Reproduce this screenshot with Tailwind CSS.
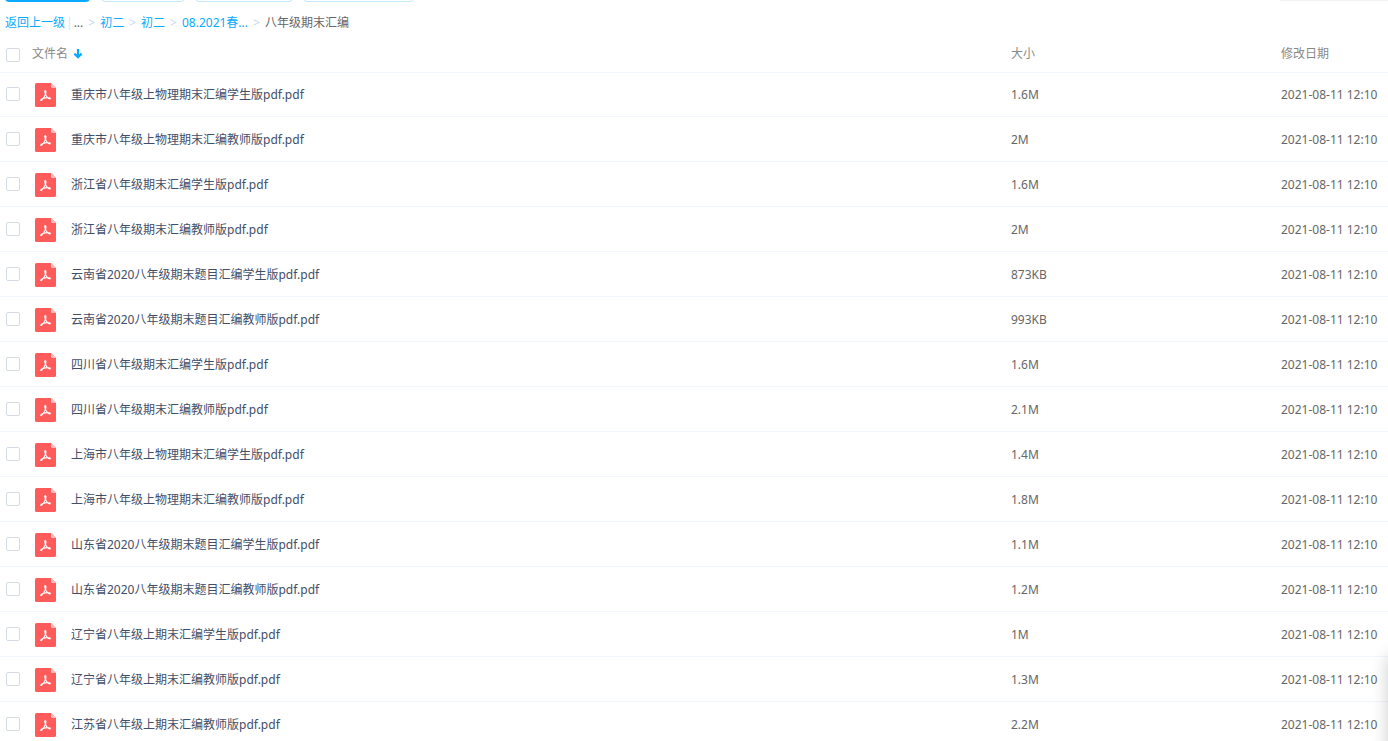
<!DOCTYPE html>
<html lang="zh-CN">
  <head>
    <meta charset="UTF-8" />
    <meta name="viewport" content="width=device-width, initial-scale=1.0" />
    <title>八年级期末汇编</title>
    <script src="https://cdn.jsdelivr.net/npm/@tailwindcss/browser@4"></script>
  </head>

  <body
    class="h-screen overflow-hidden bg-white font-['Noto_Sans','Noto_Sans_CJK_SC',sans-serif] text-xs text-[#666]"
  >
    <!-- Toolbar, scrolled almost out of view -->
    <header class="flex h-[2px] items-end overflow-hidden pl-[5px]">
      <button class="h-8 w-[85px] shrink-0 rounded bg-[#09aaff]"></button>
      <button class="ml-[11px] h-8 w-[84px] shrink-0 rounded border border-[#c3eaff]"></button>
      <button class="ml-[10px] h-8 w-[98px] shrink-0 rounded border border-[#c3eaff]"></button>
      <button class="ml-[10px] h-8 w-[111px] shrink-0 rounded border border-[#c3eaff]"></button>
      <div class="mb-px ml-auto h-8 w-[108px] shrink-0 bg-[#f2f2f2]"></div>
    </header>

    <!-- Breadcrumb -->
    <nav class="flex h-10 items-center pt-0.5 pl-[5px] text-[#09aaff]">
      <a href="#">返回上一级</a>
      <span class="mx-px text-[#c3eaff]">|</span>
      <span class="text-[#666]">...</span>
      <span class="mx-[5px] text-[#c4d8f1]">&gt;</span>
      <a href="#">初二</a>
      <span class="mx-[5px] text-[#c4d8f1]">&gt;</span>
      <a href="#">初二</a>
      <span class="mx-[5px] text-[#c4d8f1]">&gt;</span>
      <a href="#">08.2021春...</a>
      <span class="mx-[5px] text-[#c4d8f1]">&gt;</span>
      <span class="text-[#666]">八年级期末汇编</span>
    </nav>

    <!-- File list -->
    <table class="w-full table-fixed border-separate border-spacing-0 text-left">
      <colgroup>
        <col class="w-[31px]" />
        <col />
        <col class="w-[270px]" />
        <col class="w-[107px]" />
      </colgroup>
      <thead class="text-[#888]">
        <tr class="h-[31px]">
          <th class="border-b border-[#f2f6fd] pb-1 pl-[6px]">
            <input type="checkbox" aria-label="文件名" class="block size-[14px] appearance-none rounded-xs border border-[#d5dbe5]" />
          </th>
          <th class="border-b border-[#f2f6fd] pb-1.5 pl-px font-normal">
            <span class="flex items-center gap-[5px]">
              文件名
              <svg class="h-[10px] w-[10px]" viewBox="0 0 10 10" fill="none" stroke="#09aaff" stroke-width="2">
                <path d="M5 0V8.500M1.400 4.600L5 8.200L8.600 4.600" stroke-width="2.200" />
              </svg>
            </span>
          </th>
          <th class="border-b border-[#f2f6fd] pb-1.5 font-normal">大小</th>
          <th class="border-b border-[#f2f6fd] pb-1.5 font-normal">修改日期</th>
        </tr>
      </thead>
      <tbody id="file-list"></tbody>
    </table>

    <!-- Shadow of the panel docked outside the right edge -->
    <div class="fixed -right-[200px] -bottom-[60px] h-[145px] w-[200px] shadow-[0_0_16px_rgba(0,0,0,0.2)]"></div>

    <template id="file-row">
      <tr class="group h-[45px] first:h-11">
        <td class="border-b border-[#f2f6fd] pl-[6px] group-first:pb-px">
          <input type="checkbox" class="block size-[14px] appearance-none rounded-xs border border-[#d5dbe5]" />
        </td>
        <td class="border-b border-[#f2f6fd] pt-0.5 pl-1 group-first:pt-px">
          <div class="flex items-center gap-[15px]">
            <svg class="h-6 w-[21px] shrink-0" viewBox="0 0 21 24">
              <path d="M1.500 0H16L21 5V22.500Q21 24 19.500 24H1.500Q0 24 0 22.500V1.500Q0 0 1.500 0Z" fill="#ff5b5b" />
              <path d="M16 0L21 5H17Q16 5 16 4Z" fill="#ffbdbd" />
              <path d="M9.600 7.700Q11.300 7.300 10.900 9.500Q10.600 12.700 7 16.900Q6.100 17.900 5.700 17.200Q5.700 16.300 8 15.400Q11.300 14.300 14.300 14.800Q16 15.300 15 15.900Q13.300 16 11.300 13Q9.900 10.500 9.600 7.700" fill="none" stroke="#fff" stroke-width="1.100" stroke-linejoin="round" />
            </svg>
            <a href="#" class="name text-[#424e67]"></a>
          </div>
        </td>
        <td class="size border-b border-[#f2f6fd] pt-0.5 group-first:pt-px"></td>
        <td class="date border-b border-[#f2f6fd] pt-0.5 whitespace-nowrap group-first:pt-px"></td>
      </tr>
    </template>

    <script>
      const files = [
        ["重庆市八年级上物理期末汇编学生版pdf.pdf", "1.6M"],
        ["重庆市八年级上物理期末汇编教师版pdf.pdf", "2M"],
        ["浙江省八年级期末汇编学生版pdf.pdf", "1.6M"],
        ["浙江省八年级期末汇编教师版pdf.pdf", "2M"],
        ["云南省2020八年级期末题目汇编学生版pdf.pdf", "873KB"],
        ["云南省2020八年级期末题目汇编教师版pdf.pdf", "993KB"],
        ["四川省八年级期末汇编学生版pdf.pdf", "1.6M"],
        ["四川省八年级期末汇编教师版pdf.pdf", "2.1M"],
        ["上海市八年级上物理期末汇编学生版pdf.pdf", "1.4M"],
        ["上海市八年级上物理期末汇编教师版pdf.pdf", "1.8M"],
        ["山东省2020八年级期末题目汇编学生版pdf.pdf", "1.1M"],
        ["山东省2020八年级期末题目汇编教师版pdf.pdf", "1.2M"],
        ["辽宁省八年级上期末汇编学生版pdf.pdf", "1M"],
        ["辽宁省八年级上期末汇编教师版pdf.pdf", "1.3M"],
        ["江苏省八年级上期末汇编教师版pdf.pdf", "2.2M"],
      ];

      const list = document.getElementById("file-list");
      const template = document.getElementById("file-row");

      files.forEach(([name, size]) => {
        const row = template.content.cloneNode(true);
        row.querySelector("input").setAttribute("aria-label", name);
        row.querySelector(".name").textContent = name;
        row.querySelector(".size").textContent = size;
        row.querySelector(".date").textContent = "2021-08-11 12:10";
        list.appendChild(row);
      });
    </script>
  </body>
</html>
